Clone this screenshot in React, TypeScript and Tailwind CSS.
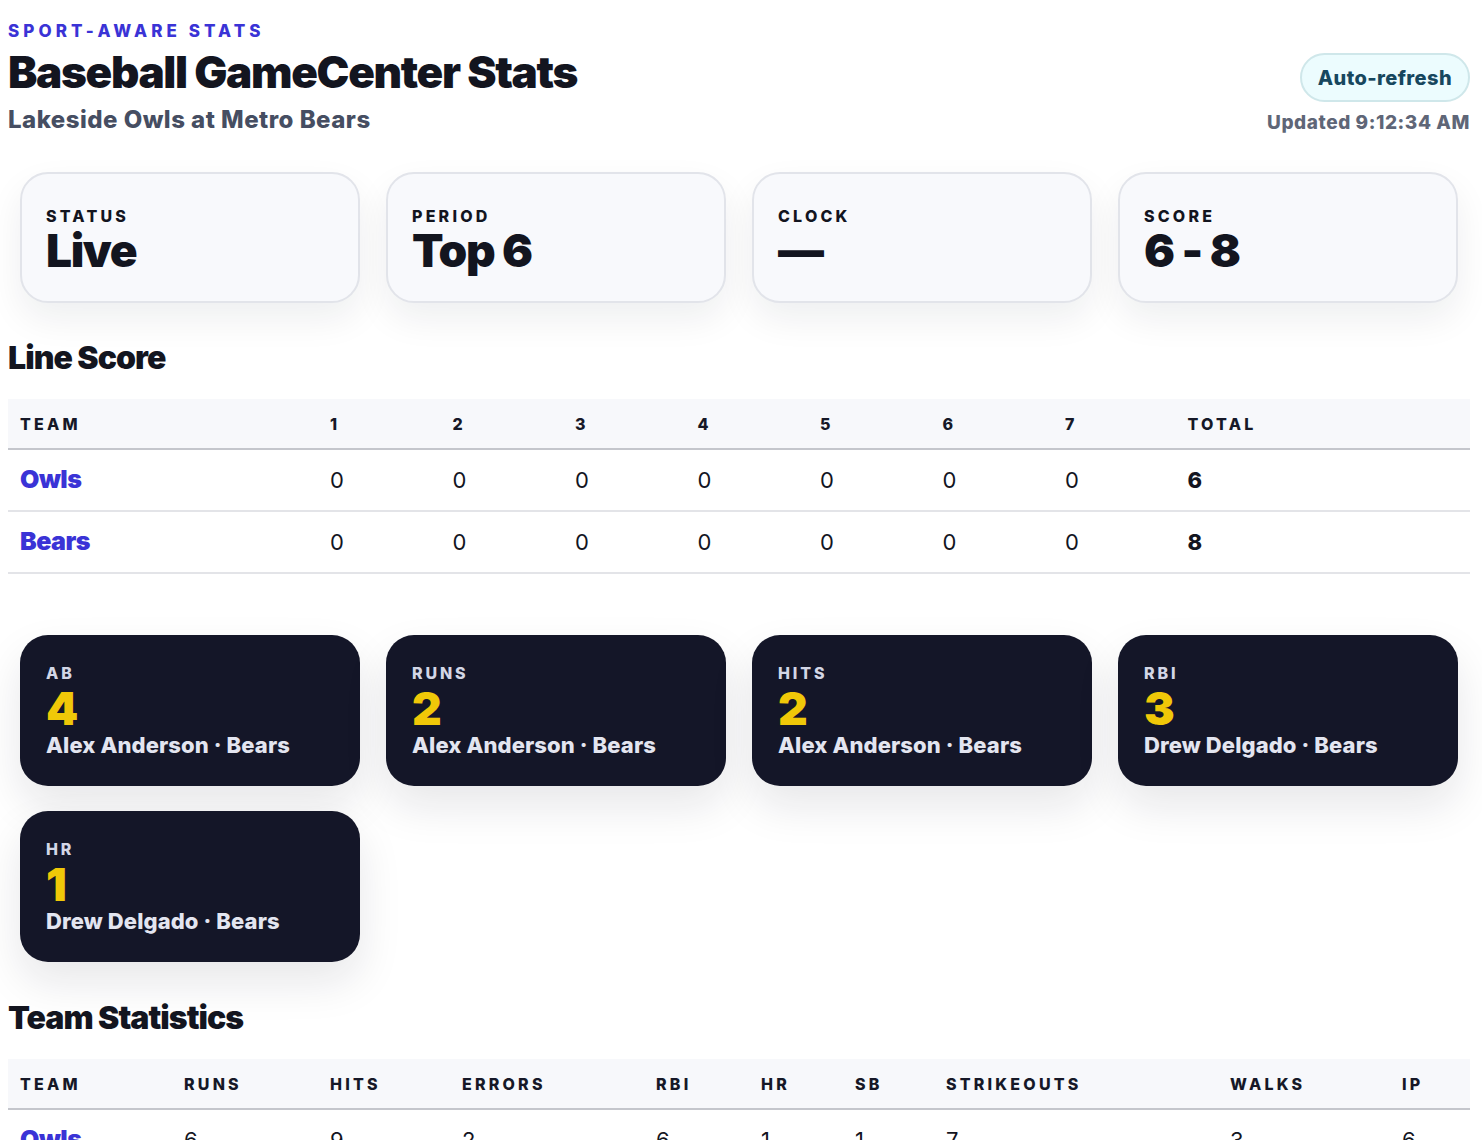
import React from "react";

const summary = [
  { label: "Status", value: "Live" },
  { label: "Period", value: "Top 6" },
  { label: "Clock", value: "—" },
  { label: "Score", value: "6 - 8" },
];

const innings = ["1", "2", "3", "4", "5", "6", "7"];

const lineScore = [
  { team: "Owls", runs: ["0", "0", "0", "0", "0", "0", "0"], total: "6" },
  { team: "Bears", runs: ["0", "0", "0", "0", "0", "0", "0"], total: "8" },
];

const leaders = [
  { stat: "AB", value: "4", player: "Alex Anderson", team: "Bears" },
  { stat: "Runs", value: "2", player: "Alex Anderson", team: "Bears" },
  { stat: "Hits", value: "2", player: "Alex Anderson", team: "Bears" },
  { stat: "RBI", value: "3", player: "Drew Delgado", team: "Bears" },
  { stat: "HR", value: "1", player: "Drew Delgado", team: "Bears" },
];

const teamCols = [
  { key: "team", label: "Team", w: "w-[164px]" },
  { key: "runs", label: "Runs", w: "w-[146px]" },
  { key: "hits", label: "Hits", w: "w-[132px]" },
  { key: "errors", label: "Errors", w: "w-[194px]" },
  { key: "rbi", label: "RBI", w: "w-[105px]" },
  { key: "hr", label: "HR", w: "w-[94px]" },
  { key: "sb", label: "SB", w: "w-[91px]" },
  { key: "so", label: "Strikeouts", w: "w-[284px]" },
  { key: "bb", label: "Walks", w: "w-[172px]" },
  { key: "ip", label: "IP", w: "w-[80px]" },
];

const teamStats = [
  { team: "Owls", runs: "6", hits: "9", errors: "2", rbi: "6", hr: "1", sb: "1", so: "7", bb: "3", ip: "6" },
  { team: "Bears", runs: "8", hits: "11", errors: "1", rbi: "8", hr: "2", sb: "0", so: "5", bb: "4", ip: "5" },
];

const th = "px-3 py-0 h-[50px] text-left text-[16px] font-extrabold uppercase tracking-[0.2em] text-[#161827]";

export default function App() {
  return (
    <div className="min-h-screen bg-white pl-2 pr-3 pt-[21px] font-['Inter',sans-serif] text-[#13151f]">
      {/* Header */}
      <header className="flex items-start justify-between">
        <div>
          <p className="text-[17px] font-extrabold uppercase leading-5 tracking-[0.24em] text-[#3a33d6]">
            Sport-aware stats
          </p>
          <h1 className="mt-[6px] text-[44px] font-black leading-[50px] tracking-[-0.03em] text-[#13151f]">
            Baseball GameCenter Stats
          </h1>
          <p className="mt-[8px] text-[24px] font-extrabold leading-[30px] tracking-[0.02em] text-[#464e62]">
            Lakeside Owls at Metro Bears
          </p>
        </div>
        <div className="flex flex-col items-end pt-[32px]">
          <button
            type="button"
            className="h-[49px] rounded-full border-2 border-[#cfe7ea] bg-[#ecfcfe] px-4 text-[20px] font-extrabold tracking-[0.02em] text-[#17475e]"
          >
            Auto-refresh
          </button>
          <p className="mt-[9px] text-[19px] font-extrabold leading-6 tracking-[0.03em] text-[#5f6677]">
            Updated 9:12:34 AM
          </p>
        </div>
      </header>

      {/* Summary cards */}
      <section className="mt-[37px] grid grid-cols-4 gap-[26px] px-3">
        {summary.map((s) => (
          <div
            key={s.label}
            className="h-[131px] rounded-[28px] border-2 border-[#e2e4ea] bg-[#f8f9fc] px-6 pt-[32px] shadow-[0_16px_36px_rgba(15,23,42,0.07)]"
          >
            <p className="text-[16px] font-extrabold uppercase leading-5 tracking-[0.2em] text-[#13151f]">
              {s.label}
            </p>
            <p className="text-[46px] font-black leading-[48px] tracking-[-0.03em] text-[#13151f]">{s.value}</p>
          </div>
        ))}
      </section>

      {/* Line score */}
      <h2 className="mt-[37px] text-[32px] font-black leading-9 tracking-[-0.03em]">Line Score</h2>
      <table className="mt-[23px] w-full table-fixed border-collapse">
        <thead>
          <tr className="border-b-2 border-[#c4c6cc] bg-[#f7f8fb]">
            <th className={`${th} w-[310px]`}>Team</th>
            {innings.map((i) => (
              <th key={i} className={`${th} w-[122.5px]`}>
                {i}
              </th>
            ))}
            <th className={th}>Total</th>
          </tr>
        </thead>
        <tbody>
          {lineScore.map((r) => (
            <tr key={r.team} className="h-[62px] border-b-2 border-[#e3e4e8]">
              <td className="px-3 text-[25px] font-black tracking-[-0.02em] text-[#3a33d6]">{r.team}</td>
              {r.runs.map((v, idx) => (
                <td key={idx} className="px-3 text-[22px] font-normal text-[#13151f]">
                  {v}
                </td>
              ))}
              <td className="px-3 text-[22px] font-extrabold text-[#13151f]">{r.total}</td>
            </tr>
          ))}
        </tbody>
      </table>

      {/* Leaders */}
      <section className="mt-[61px] grid grid-cols-4 gap-x-[26px] gap-y-[25px] px-3">
        {leaders.map((l) => (
          <div
            key={l.stat}
            className="h-[151px] rounded-[28px] bg-[#141628] px-[26px] pt-[29px] shadow-[0_20px_44px_rgba(15,23,42,0.10)]"
          >
            <p className="text-[16px] font-extrabold uppercase leading-[19px] tracking-[0.18em] text-[#d3d6e6]">
              {l.stat}
            </p>
            <p className="text-[46px] font-black leading-[50px] tracking-[-0.03em] text-[#f0c808]">{l.value}</p>
            <p className="text-[22px] font-extrabold leading-6 tracking-[0.005em] text-[#e3e5f0]">
              {l.player} · {l.team}
            </p>
          </div>
        ))}
      </section>

      {/* Team statistics */}
      <h2 className="mt-[38px] text-[32px] font-black leading-9 tracking-[-0.03em]">Team Statistics</h2>
      <table className="mt-[23px] w-full table-fixed border-collapse">
        <thead>
          <tr className="border-b-2 border-[#c4c6cc] bg-[#f7f8fb]">
            {teamCols.map((c) => (
              <th key={c.key} className={`${th} ${c.w}`}>
                {c.label}
              </th>
            ))}
          </tr>
        </thead>
        <tbody>
          {teamStats.map((r) => (
            <tr key={r.team} className="h-[62px] border-b-2 border-[#e3e4e8]">
              {teamCols.map((c) =>
                c.key === "team" ? (
                  <td key={c.key} className="px-3 text-[25px] font-black tracking-[-0.02em] text-[#3a33d6]">
                    {r.team}
                  </td>
                ) : (
                  <td key={c.key} className="px-3 text-[22px] font-normal text-[#13151f]">
                    {r[c.key as keyof typeof r]}
                  </td>
                )
              )}
            </tr>
          ))}
        </tbody>
      </table>
    </div>
  );
}
